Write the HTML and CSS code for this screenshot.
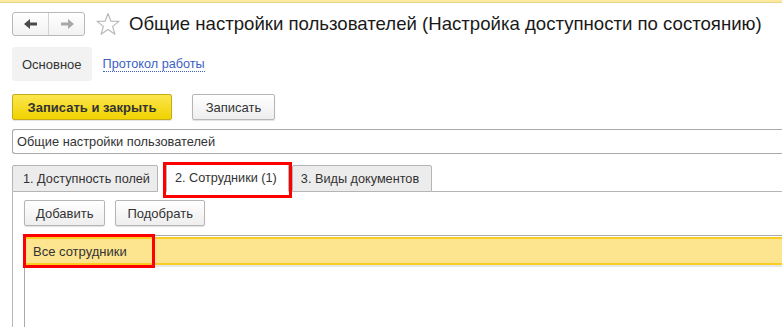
FILE: index.html
```html
<!DOCTYPE html>
<html lang="ru">
<head>
<meta charset="utf-8">
<link rel="stylesheet" href="styles.css">
</head>
<body>
<div class="topline"></div>
<div class="header">
  <div class="nav">
    <span class="nav-btn">
      <svg width="16" height="12" viewBox="0 0 16 12"><path d="M1 6 L7 1 L7 4.5 L14 4.5 L14 7.5 L7 7.5 L7 11 Z" fill="#4a4a4a"/></svg>
    </span>
    <span class="nav-btn">
      <svg width="16" height="12" viewBox="0 0 16 12"><path d="M15 6 L9 1 L9 4.5 L2 4.5 L2 7.5 L9 7.5 L9 11 Z" fill="#a8a8a8"/></svg>
    </span>
  </div>
  <svg class="star" width="26" height="24" viewBox="0 0 26 24"><path d="M13 1.5 L15.9 9.2 L24 9.4 L17.6 14.4 L19.9 22.3 L13 17.6 L6.1 22.3 L8.4 14.4 L2 9.4 L10.1 9.2 Z" fill="none" stroke="#b9b9b9" stroke-width="1.2" stroke-linejoin="round"/></svg>
  <h1 class="title">Общие настройки пользователей (Настройка доступности по состоянию)</h1>
</div>
<div class="sections">
  <span class="section active">Основное</span>
  <a class="section-link" href="#">Протокол работы</a>
</div>
<div class="toolbar">
  <button class="btn btn-primary">Записать и закрыть</button>
  <button class="btn btn-secondary">Записать</button>
</div>
<div class="field">Общие настройки пользователей</div>
<div class="tabs">
  <span class="tab tab-first">1. Доступность полей</span>
  <span class="tab tab-active marked">2. Сотрудники (1)</span>
  <span class="tab tab-last">3. Виды документов</span>
  <span class="tab-rest"></span>
</div>
<div class="panel">
  <div class="panel-toolbar">
    <button class="btn">Добавить</button>
    <button class="btn">Подобрать</button>
  </div>
  <div class="table">
    <div class="row selected"><span class="cell marked-cell">Все сотрудники</span></div>
  </div>
</div>
</body>
</html>
```
FILE: styles.css
```css
* { box-sizing: border-box; }
html, body { margin: 0; padding: 0; background: #fff; }
body {
  font-family: Arial, "Liberation Sans", sans-serif;
  font-size: 13px;
  color: #333;
  width: 782px;
  height: 327px;
  overflow: hidden;
}
.topline {
  height: 3px;
  background: #fbeaa0;
  border-bottom: 1px solid #e6d488;
}
.header {
  display: flex;
  align-items: center;
  padding-left: 12px;
  margin-top: 9px;
  height: 24px;
}
.nav {
  flex-shrink: 0;
  display: flex;
  width: 73px;
  height: 24px;
  border: 1px solid #b8b8b8;
  border-radius: 3px;
  background: linear-gradient(#ffffff, #f2f2f2);
}
.nav-btn {
  flex: 1;
  display: flex;
  align-items: center;
  justify-content: center;
}
.nav-btn + .nav-btn { border-left: 1px solid #d4d4d4; }
.star { flex-shrink: 0; margin-left: 10px; }
.title {
  flex-shrink: 0;
  margin: 0 0 0 8px;
  font-size: 18.6px;
  font-weight: normal;
  color: #1a1a1a;
  white-space: nowrap;
}
.sections {
  display: flex;
  align-items: center;
  padding-left: 12px;
  margin-top: 11px;
  height: 34px;
}
.section {
  display: flex;
  align-items: center;
  height: 34px;
  padding: 0 10px;
  background: #f2f2f2;
  border-radius: 3px;
  color: #333;
}
.section-link {
  margin-left: 11px;
  color: #3d5fc4;
  text-decoration: none;
  border-bottom: 1px dotted #3d5fc4;
  line-height: 14px;
  font-size: 12.7px;
}
.toolbar {
  display: flex;
  gap: 20px;
  padding-left: 12px;
  margin-top: 13px;
}
.btn {
  font-family: Arial, "Liberation Sans", sans-serif;
  font-size: 13px;
  color: #333;
  height: 26px;
  padding: 0 12px;
  border: 1px solid #b5b5b5;
  border-radius: 2px;
  background: linear-gradient(#ffffff, #eeeeee);
  box-shadow: 0 1px 1px rgba(0,0,0,0.12);
}
.btn-primary {
  width: 160px;
  font-weight: bold;
  color: #333;
  background: linear-gradient(#fbe64e, #f1d201);
  border-color: #c5ab18;
}
.btn-secondary { width: 83px; }
.field {
  margin: 9px 0 0 12px;
  height: 25px;
  border: 1px solid #a9a9a9;
  border-right: none;
  border-radius: 3px 0 0 3px;
  padding-left: 4px;
  line-height: 23px;
  color: #333;
  font-size: 12.8px;
}
.tabs {
  display: flex;
  align-items: flex-end;
  margin: 10px 0 0 12px;
  height: 28px;
  font-size: 12.7px;
}
.tab {
  height: 27px;
  padding: 0 10px 0 7px;
  display: flex;
  align-items: center;
  background: #ececec;
  border: 1px solid #b5b5b5;
  border-radius: 2px 2px 0 0;
  margin-right: 3px;
}
.tab-first { padding: 0 7px 0 10px; }
.tab-last { padding: 0 12px 0 8px; }
.tab-active {
  background: #fff;
  border-bottom-color: #fff;
  height: 28px;
  margin-left: 5px;
  padding: 0 11px 0 8px;
}
.tab-rest {
  flex: 1;
  border-bottom: 1px solid #b5b5b5;
  align-self: flex-end;
  margin-left: -3px;
}
.marked { position: relative; }
.marked::after {
  content: "";
  position: absolute;
  left: -4px;
  right: -4px;
  top: -3px;
  bottom: -7px;
  border: 3px solid #f00;
}
.panel {
  margin-left: 12px;
  border-left: 1px solid #b5b5b5;
  height: 136px;
  padding: 8px 0 0 11px;
}
.panel-toolbar {
  display: flex;
  gap: 10px;
}
.panel-toolbar .btn { padding: 0 11px; }
.table {
  margin-top: 9px;
  border-top: 1px solid #aaaaaa;
  border-left: 1px solid #aaaaaa;
  height: 92px;
  padding-top: 1px;
}
.row.selected {
  height: 28px;
  background: #fde48f;
  border-top: 2px solid #fbcd23;
  border-bottom: 2px solid #fbcd23;
  display: flex;
  align-items: center;
  box-shadow: 0 2px 0 #e8e8e8;
}
.cell {
  padding-left: 8px;
  position: relative;
  color: #333;
}
.marked-cell::after {
  content: "";
  position: absolute;
  left: -2px;
  right: -28px;
  top: -10px;
  bottom: -9px;
  border: 3px solid #f00;
}
```
